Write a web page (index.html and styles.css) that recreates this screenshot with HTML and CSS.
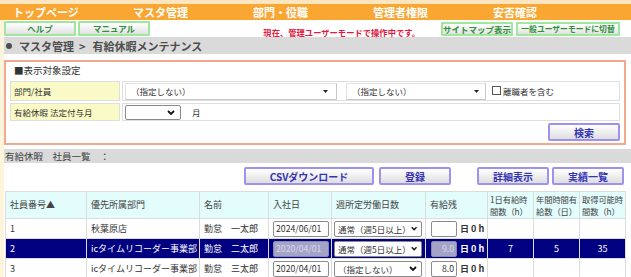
FILE: index.html
```html
<!DOCTYPE html>
<html lang="ja">
<head>
<meta charset="utf-8">
<title>有給休暇メンテナンス</title>
<link rel="stylesheet" href="styles.css">
</head>
<body>
<nav class="gnav">
  <a class="gnav-item" href="#">トップページ</a>
  <a class="gnav-item" href="#">マスタ管理</a>
  <a class="gnav-item" href="#">部門・役職</a>
  <a class="gnav-item" href="#">管理者権限</a>
  <a class="gnav-item" href="#">安否確認</a>
</nav>
<div class="main">
  <div class="toolbar">
    <div class="btn-group">
      <button class="btn-g" type="button">ヘルプ</button>
      <button class="btn-g" type="button">マニュアル</button>
    </div>
    <p class="mode-msg">現在、管理ユーザーモードで操作中です。</p>
    <div class="btn-group btn-group-right">
      <button class="btn-g" type="button">サイトマップ表示</button>
      <button class="btn-g btn-g-wide" type="button">一般ユーザーモードに切替</button>
    </div>
  </div>
  <h1 class="crumb"><span class="crumb-dot"></span>マスタ管理<span class="crumb-sep">&gt;</span>有給休暇メンテナンス</h1>

  <section class="search">
    <h2 class="search-title">■表示対象設定</h2>
    <table class="search-table">
      <tr class="row-a">
        <th>部門/社員</th>
        <td>
          <div class="cell-flex">
            <span class="sel sel-dept"><span class="sel-text">（指定しない）</span><svg class="tri" width="5" height="3" viewBox="0 0 5 3"><polygon points="0,0 5,0 2.5,3" fill="#222"/></svg></span>
            <span class="sel sel-emp"><span class="sel-text">（指定しない）</span><svg class="tri" width="5" height="3" viewBox="0 0 5 3"><polygon points="0,0 5,0 2.5,3" fill="#222"/></svg></span>
            <label class="chk"><input type="checkbox">離職者を含む</label>
          </div>
        </td>
      </tr>
      <tr class="row-b">
        <th>有給休暇 法定付与月</th>
        <td>
          <div class="cell-flex">
            <span class="sel sel-month"><span class="sel-text"></span><svg class="chev" width="8" height="5" viewBox="0 0 8 5"><polyline points="1,1 4,4 7,1" fill="none" stroke="#111" stroke-width="1.8"/></svg></span>
            <span class="unit">月</span>
          </div>
        </td>
      </tr>
    </table>
    <div class="search-actions">
      <button class="btn-p btn-search" type="button">検索</button>
    </div>
  </section>

  <h2 class="list-title">有給休暇　社員一覧　：</h2>
  <div class="list-actions">
    <button class="btn-p btn-csv" type="button">CSVダウンロード</button>
    <button class="btn-p btn-reg" type="button">登録</button>
    <button class="btn-p btn-detail" type="button">詳細表示</button>
    <button class="btn-p" type="button">実績一覧</button>
  </div>

  <table class="grid">
    <colgroup>
      <col class="c-no"><col class="c-dept"><col class="c-name"><col class="c-date"><col class="c-days"><col class="c-rest"><col class="c-h"><col class="c-h"><col class="c-h">
    </colgroup>
    <thead>
      <tr>
        <th>社員番号▲</th>
        <th>優先所属部門</th>
        <th>名前</th>
        <th>入社日</th>
        <th>週所定労働日数</th>
        <th>有給残</th>
        <th class="th-2">1日有給時<br>間数（h）</th>
        <th class="th-2">年間時間有<br>給数（日）</th>
        <th class="th-2">取得可能時<br>間数（h）</th>
      </tr>
    </thead>
    <tbody>
      <tr>
        <td>1</td>
        <td>秋葉原店</td>
        <td>勤怠　一太郎</td>
        <td class="td-date"><span class="inp inp-date">2024/06/01</span></td>
        <td class="td-sel"><span class="sel sel-days"><span class="sel-text">通常（週5日以上）</span><svg class="chev" width="8" height="5" viewBox="0 0 8 5"><polyline points="1,1 4,4 7,1" fill="none" stroke="#111" stroke-width="1.8"/></svg></span></td>
        <td class="td-rest"><span class="rest"><span class="inp inp-num"></span><span class="rest-unit">日 0 h</span></span></td>
        <td class="num"></td>
        <td class="num"></td>
        <td class="num"></td>
      </tr>
      <tr class="is-selected">
        <td>2</td>
        <td>icタイムリコーダー事業部</td>
        <td>勤怠　二太郎</td>
        <td class="td-date"><span class="inp inp-date inp-off">2020/04/01</span></td>
        <td class="td-sel"><span class="sel sel-days"><span class="sel-text">通常（週5日以上）</span><svg class="chev" width="8" height="5" viewBox="0 0 8 5"><polyline points="1,1 4,4 7,1" fill="none" stroke="#111" stroke-width="1.8"/></svg></span></td>
        <td class="td-rest"><span class="rest"><span class="inp inp-num inp-off">9.0</span><span class="rest-unit">日 0 h</span></span></td>
        <td class="num">7</td>
        <td class="num">5</td>
        <td class="num">35</td>
      </tr>
      <tr>
        <td>3</td>
        <td>icタイムリコーダー事業部</td>
        <td>勤怠　三太郎</td>
        <td class="td-date"><span class="inp inp-date">2020/04/01</span></td>
        <td class="td-sel"><span class="sel sel-days"><span class="sel-text">（指定しない）</span><svg class="chev" width="8" height="5" viewBox="0 0 8 5"><polyline points="1,1 4,4 7,1" fill="none" stroke="#111" stroke-width="1.8"/></svg></span></td>
        <td class="td-rest"><span class="rest"><span class="inp inp-num">8.0</span><span class="rest-unit">日 0 h</span></span></td>
        <td class="num"></td>
        <td class="num"></td>
        <td class="num"></td>
      </tr>
    </tbody>
  </table>
</div>
</body>
</html>
```

FILE: styles.css
```css
* { box-sizing: border-box; }
html, body { margin: 0; padding: 0; }
body {
  width: 631px;
  height: 277px;
  overflow: hidden;
  background: #fcf5dc;
  font-family: "Noto Sans CJK JP", "Noto Sans", sans-serif;
  color: #333;
}
h1, h2, p { margin: 0; }
button { font-family: inherit; padding: 0; cursor: pointer; white-space: nowrap; }

/* global nav */
.gnav {
  display: flex;
  height: 20px;
  border-top: 4px solid #fde5bf;
  background: #f9a633;
  padding-left: 13px;
}
.gnav-item {
  width: 120px;
  color: #fff;
  font-size: 11px;
  font-weight: bold;
  line-height: 16px;
  text-decoration: none;
}

.main {
  margin-left: 4px;
  background: #fff;
  height: 257px;
}

/* toolbar */
.toolbar {
  display: flex;
  align-items: flex-start;
  height: 17px;
  padding: 1px 11px 0 0;
}
.btn-group { display: flex; gap: 2px; }
.btn-group-right { gap: 3px; margin-top: 1px; }
.btn-g {
  width: 72px;
  height: 15px;
  border: 2px solid #9ee89e;
  border-radius: 1px;
  background: linear-gradient(#ffffff, #e2e2e2);
  color: #2f8f3a;
  font-size: 8.5px;
  font-weight: bold;
  line-height: 11px;
}
.btn-group-right .btn-g { height: 14px; line-height: 10px; }
.btn-g-wide { width: 104px; font-size: 7.8px; }
.mode-msg {
  margin: 6px 21px 0 auto;
  color: #e2183f;
  font-size: 8.3px;
  line-height: 11px;
  font-weight: bold;
}

/* breadcrumb */
.crumb {
  display: flex;
  align-items: center;
  height: 17px;
  padding-left: 2px;
  background: #dadada;
  color: #4e4e4e;
  font-size: 11px;
  font-weight: bold;
}
.crumb-dot {
  width: 6px;
  height: 6px;
  border-radius: 50%;
  background: #4e4e4e;
  margin-right: 7px;
}
.crumb-sep { margin: 0 7px 0 5px; }

/* search box */
.search {
  margin: 6px 5px 0 0;
  border: 2px solid #f2a890;
  padding: 0 2px 2px;
  height: 85px;
}
.search-title {
  height: 17px;
  line-height: 17px;
  padding-left: 6px;
  font-size: 9.5px;
  font-weight: normal;
  color: #333;
}
.search-table {
  width: 100%;
  border-collapse: separate;
  border-spacing: 2px;
  font-size: 8.5px;
}
.search-table th,
.search-table td {
  border: 1px solid #dedede;
  padding: 0;
}
.search-table th {
  width: 110px;
  background: #fafac6;
  text-align: left;
  font-weight: normal;
  padding-left: 3px;
  color: #333;
}
.row-a th, .row-a td { height: 20px; }
.row-b th, .row-b td { height: 18px; }
.cell-flex {
  display: flex;
  align-items: center;
  padding-left: 2px;
}

.sel {
  display: inline-flex;
  align-items: center;
  justify-content: space-between;
  background: #fff;
  border: 1px solid #d0d0d0;
  font-size: 8.5px;
  color: #333;
  white-space: nowrap;
}
.sel-text { padding-left: 5px; }
.sel-dept { width: 212px; height: 17px; padding-right: 8px; border-color: #e2e2e2 #c8c8c8 #c8c8c8 #e2e2e2; }
.sel-emp { width: 140px; height: 17px; margin-left: 9px; padding-right: 6px; border-color: #e2e2e2 #c8c8c8 #c8c8c8 #e2e2e2; }
.sel-month { width: 56px; height: 15px; padding-right: 5px; border-color: #8a8a8a; border-radius: 2px; }
.chk {
  display: inline-flex;
  align-items: center;
  margin-left: 6px;
  font-size: 8.5px;
  color: #333;
  align-self: flex-start;
  margin-top: 2px;
}
.chk input {
  appearance: none;
  width: 9px;
  height: 9px;
  margin: 0 2px 0 0;
  border: 1px solid #555;
  background: #fff;
}
.unit { margin-left: 11px; font-size: 8.5px; }

.search-actions {
  display: flex;
  justify-content: flex-end;
  padding-right: 2px;
}

/* purple buttons */
.btn-p {
  width: 72px;
  height: 18px;
  border: 2px solid #9f92ee;
  border-radius: 2px;
  background: linear-gradient(#ffffff, #dedede);
  color: #3434b4;
  font-size: 10px;
  font-weight: bold;
  line-height: 13px;
}

/* list */
.list-title {
  margin-top: 4px;
  height: 14px;
  line-height: 14px;
  padding-left: 1px;
  background: #dadada;
  font-size: 9.5px;
  font-weight: normal;
  color: #444;
}
.list-actions {
  display: flex;
  justify-content: flex-end;
  margin-top: 4px;
  padding-right: 7px;
  height: 18px;
}
.btn-csv { width: 130px; }
.btn-reg { margin-left: 5px; }
.btn-detail { margin-left: 26px; margin-right: 3px; }

/* grid */
.grid {
  margin: 6px 0 0 1px;
  width: 620px;
  table-layout: fixed;
  border-collapse: collapse;
  font-size: 9px;
}
.c-no { width: 81px; }
.c-dept { width: 113px; }
.c-name { width: 69px; }
.c-date { width: 63px; }
.c-days { width: 94px; }
.c-rest { width: 62px; }
.c-h { width: 46px; }
.grid th,
.grid td {
  border: 1px solid #dcdcdc;
  padding: 0 0 0 4px;
  text-align: left;
  white-space: nowrap;
  overflow: hidden;
}
.grid th {
  height: 27px;
  background: #e3fcfc;
  font-weight: normal;
  color: #444;
  line-height: 12px;
}
.grid th.th-2 { padding-left: 2px; font-size: 8.3px; letter-spacing: -0.1px; }
.grid td { height: 20px; background: #fff; color: #333; }
.grid td.num { text-align: center; padding: 0; }
.grid td.td-sel { padding-left: 2px; }
.grid td.td-rest { padding-left: 5px; }
.grid tr.is-selected td { background: #000080; color: #fff; }

.inp {
  display: inline-flex;
  align-items: center;
  height: 16px;
  border: 1px solid #8c8c8c;
  border-radius: 2px;
  background: #fff;
  color: #333;
  font-size: 8.7px;
  vertical-align: middle;
}
.inp-date { width: 56px; padding-left: 2px; }
.inp-num { width: 26px; justify-content: flex-end; padding-right: 2px; }
.inp-off { background: #a4a4c8; color: #d8d8e8; border-color: #8888aa; }
.sel-days { width: 88px; height: 16px; border-color: #8a8a8a; border-radius: 2px; padding-right: 4px; vertical-align: middle; }
.sel-days .sel-text { padding-left: 3px; }
.rest { display: inline-flex; align-items: center; vertical-align: middle; }
.rest-unit { margin-left: 3px; font-weight: bold; }
```
